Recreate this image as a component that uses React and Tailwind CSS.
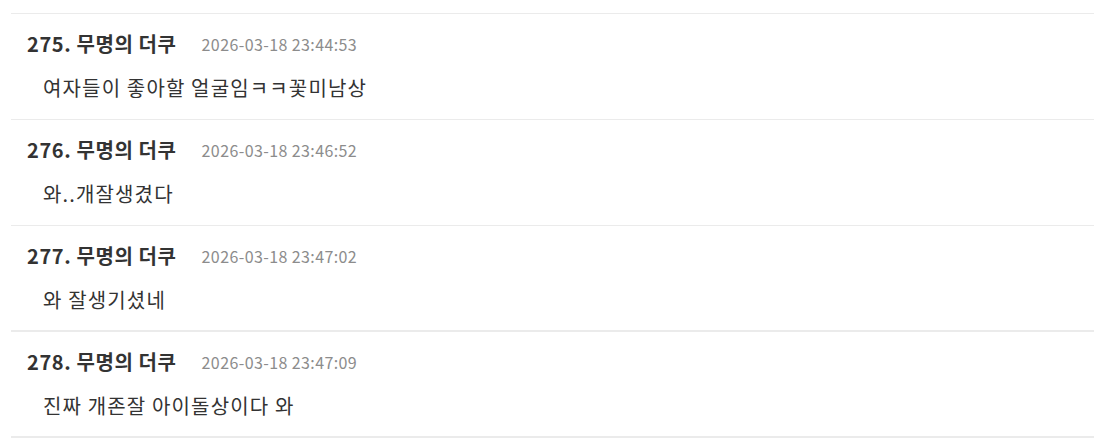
import React from 'react';

const comments = [
  { no: 275, time: '2026-03-18 23:44:53', text: '여자들이 좋아할 얼굴임ㅋㅋ꽃미남상', b: 'border-b' },
  { no: 276, time: '2026-03-18 23:46:52', text: '와..개잘생겼다', b: 'border-b' },
  { no: 277, time: '2026-03-18 23:47:02', text: '와 잘생기셨네', b: 'border-b-2' },
  { no: 278, time: '2026-03-18 23:47:09', text: '진짜 개존잘 아이돌상이다 와', b: 'border-b-2' },
];

const Comment = ({ item }) => (
  <li className={`flex flex-col h-[106px] pl-4 pt-[17px] border-[#ebebeb] ${item.b}`}>
    <div className="flex items-center h-[26px]">
      <span className="text-[20px] font-bold tracking-[0.6px] text-[#333]">{item.no}. 무명의 더쿠</span>
      <span className="ml-[25px] text-[16px] tracking-[0.4px] text-[#8c8c8c]">{item.time}</span>
    </div>
    <p className="mt-[18px] pl-4 h-[26px] leading-[26px] text-[20px] tracking-[1.15px] text-[#333]">{item.text}</p>
  </li>
);

export default function App() {
  return (
    <div
      className="w-[1094px] h-[443px] bg-white pt-[13px] pl-[11px] overflow-hidden"
      style={{ fontFamily: '"Noto Sans CJK KR", "Noto Sans", sans-serif' }}
    >
      <ul className="border-t border-[#ebebeb]">
        {comments.map((c) => (
          <Comment key={c.no} item={c} />
        ))}
      </ul>
    </div>
  );
}
